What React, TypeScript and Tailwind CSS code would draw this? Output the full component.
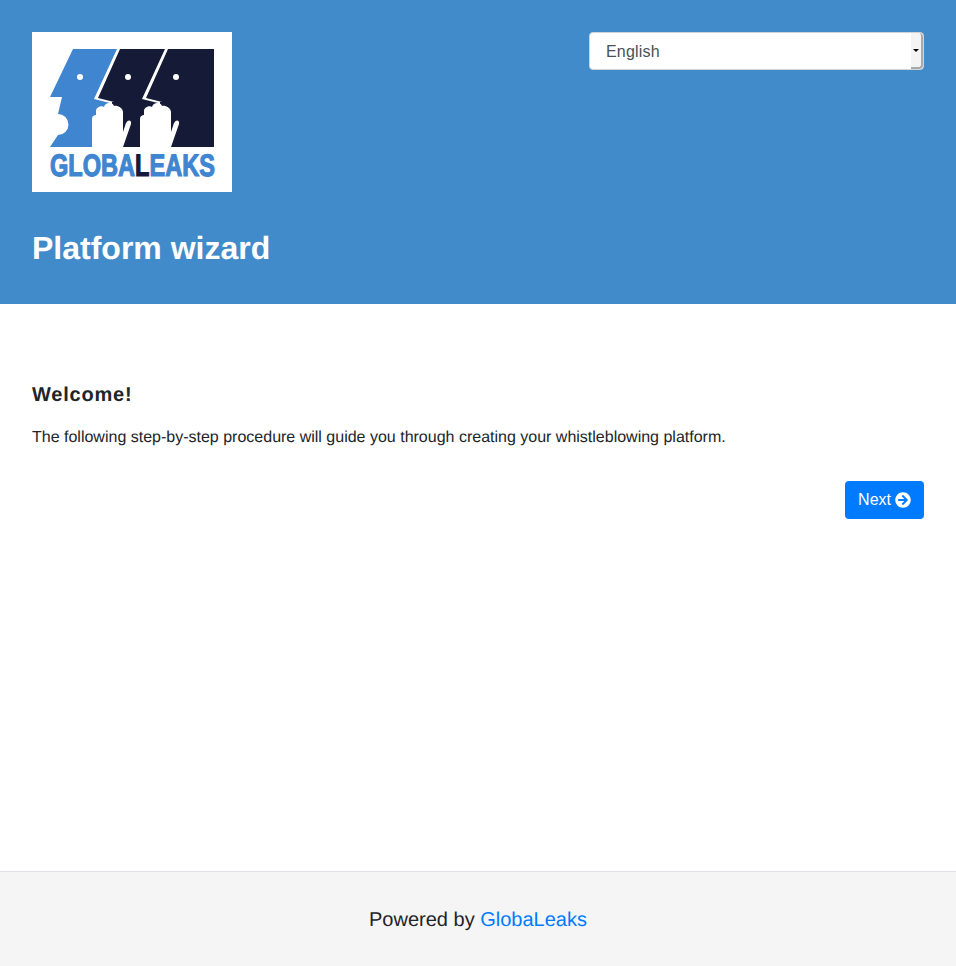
import React from 'react';

const Logo = () => (
  <svg viewBox="0 0 200 160" className="block h-40 w-[200px]" role="img" aria-label="GlobaLeaks">
    <rect width="200" height="160" fill="#fff" />
    {/* blue head */}
    <path
      d="M41 17H85L62 67L78 71V115H18L26 103A10.500 10.500 0 0 0 26 82L30 65H18Z"
      fill="#3f85cf"
    />
    {/* dark heads */}
    <path d="M88 17H133L110 67L126 71V115H80V70H82L66 66Z" fill="#151b36" />
    <path d="M136 17H182V115H128V70H130L114 66Z" fill="#151b36" />
    <circle cx="48" cy="45" r="3" fill="#fff" />
    <circle cx="96" cy="45" r="3" fill="#fff" />
    <circle cx="144" cy="45" r="3" fill="#fff" />
    {/* raised hands */}
    <path
      d="M60 115V87C60 84 62 83 64 83V79C64 75 70 73 72 75C73 70 81 70 82 74C85 73 91 76 91 80V100L94 91C96 87 100 88 99 92L91 115Z"
      fill="#fff"
    />
    <path
      d="M108 115V87C108 84 110 83 112 83V79C112 75 118 73 120 75C121 70 129 70 130 74C133 73 139 76 139 80V100L142 91C144 87 148 88 147 92L139 115Z"
      fill="#fff"
    />
    <text
      transform="translate(18 143.500) scale(0.76 1)"
      fontFamily="'Liberation Sans', sans-serif"
      fontWeight="700"
      fontSize="31"
      fill="#3f85cf"
      stroke="#3f85cf"
      strokeWidth="1.200"
    >
      GLOBA<tspan fill="#151b36" stroke="#151b36">L</tspan>EAKS
    </text>
  </svg>
);

const NextIcon = () => (
  <svg viewBox="0 0 512 512" className="ml-1 h-4 w-4" fill="currentColor" aria-hidden="true">
    <path d="M256 8c137 0 248 111 248 248S393 504 256 504 8 393 8 256 119 8 256 8zm-28.900 143.600l75.500 72.400H120c-13.300 0-24 10.700-24 24v16c0 13.300 10.700 24 24 24h182.600l-75.500 72.400c-9.700 9.300-9.900 24.800-.4 34.300l11 10.900c9.400 9.400 24.600 9.400 33.900 0L404.300 273c9.400-9.400 9.400-24.600 0-33.900L271.600 106.300c-9.400-9.400-24.600-9.400-33.900 0l-11 10.900c-9.500 9.600-9.300 25.100.4 34.400z" />
  </svg>
);

export default function App() {
  return (
    <div className="flex min-h-[966px] flex-col bg-white font-['Liberation_Sans',Arial,sans-serif] text-base text-[#212529] antialiased [text-rendering:geometricPrecision]">
      {/* Header */}
      <header className="flex h-[304px] items-start justify-between bg-[#428bca] p-8">
        <div>
          <Logo />
          <h1 className="mt-9 text-[32px] leading-10 font-bold text-white">Platform wizard</h1>
        </div>
        <div className="relative h-[38px] w-[335px]">
          <select className="h-full w-full appearance-none rounded border border-[#ced4da] bg-white pt-0.5 pl-4 text-base tracking-[0.2px] text-[#495057]">
            <option>English</option>
          </select>
          <div className="absolute top-px right-px bottom-px flex w-3 items-center justify-center rounded-r border-r-2 border-b-2 border-[#a9a9a9] bg-[#f4f4f4]">
            <span className="h-0 w-0 border-x-[3px] border-t-[3px] border-x-transparent border-t-black" />
          </div>
        </div>
      </header>

      {/* Wizard step */}
      <main className="flex-1 px-8 pt-[77px]">
        <h2 className="text-xl leading-[28px] font-bold tracking-[0.8px]">Welcome!</h2>
        <p className="mt-[17px] leading-6">
          The following step-by-step procedure will guide you through creating your whistleblowing platform.
        </p>
        <div className="mt-[31px] flex justify-end">
          <button className="flex h-[38px] items-center rounded bg-[#007bff] px-[13px] text-white">
            Next
            <NextIcon />
          </button>
        </div>
      </main>

      {/* Footer */}
      <footer className="flex h-[95px] items-center justify-center border-t border-[#dee2e6] bg-[#f5f5f5] pt-0.5 text-[20px]">
        <span>
          Powered by <a href="#" className="text-[#007bff]">GlobaLeaks</a>
        </span>
      </footer>
    </div>
  );
}
